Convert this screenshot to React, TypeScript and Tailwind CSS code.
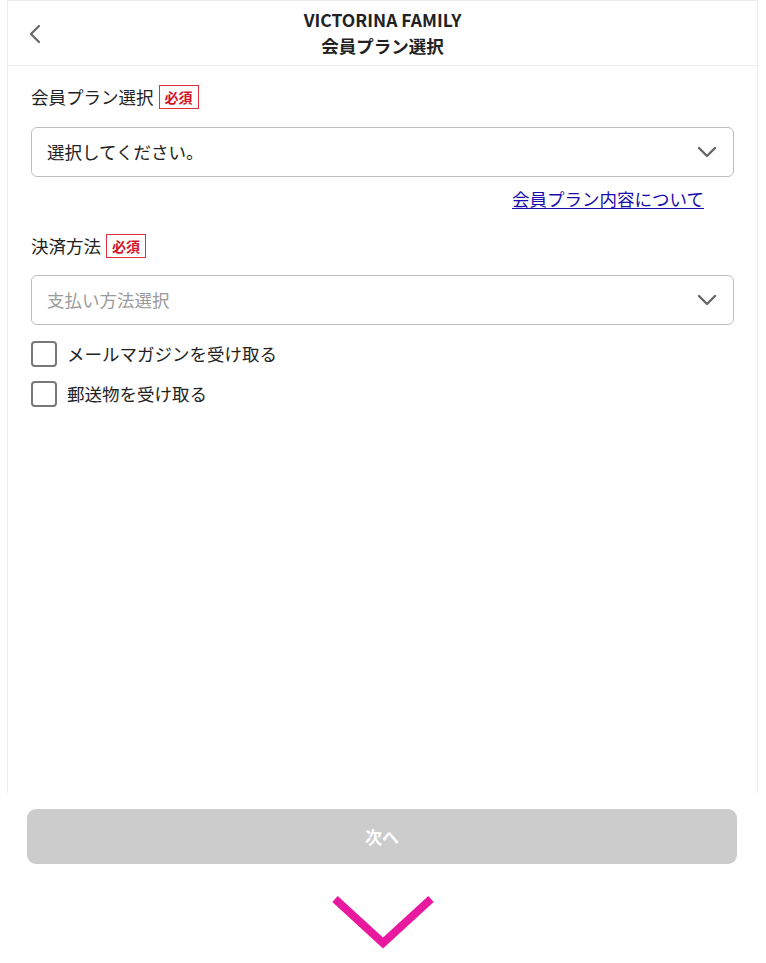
import React from 'react'

const font = { fontFamily: '"Noto Sans CJK JP", "Noto Sans", sans-serif' }

function Required() {
  return (
    <span className="ml-[5px] inline-flex h-[24px] items-center border border-[#e0303f] px-[5px] text-[14px] font-bold leading-none text-[#d3142a]">
      必須
    </span>
  )
}

function Chevron({ className }: { className?: string }) {
  return (
    <svg className={className} width="20" height="12" viewBox="0 0 20 12" fill="none">
      <path d="M2 2l8 8 8-8" stroke="#666" strokeWidth="2.4" strokeLinecap="round" strokeLinejoin="round" />
    </svg>
  )
}

function SelectBox({ text, placeholder }: { text: string; placeholder?: boolean }) {
  return (
    <div className="flex h-[50px] items-center justify-between rounded-[6px] border border-[#bdbdbd] pl-[15px] pr-[16px]">
      <span className={`text-[17.5px] ${placeholder ? 'text-[#9a9a9a]' : 'text-[#222]'}`}>{text}</span>
      <Chevron />
    </div>
  )
}

function Check({ label }: { label: string }) {
  return (
    <label className="flex items-center gap-[10px]">
      <span className="h-[26px] w-[26px] rounded-[4px] border-2 border-[#777]" />
      <span className="text-[17.5px] text-[#222]">{label}</span>
    </label>
  )
}

export default function App() {
  return (
    <div className="min-h-[963px] bg-white" style={font}>
      <div className="ml-[7px] h-[793px] w-[751px] border-x border-t border-[#ececec]">
        <header className="relative flex h-[65px] flex-col items-center justify-center border-b border-[#ececec]">
          <svg className="absolute left-[20px] top-[23px]" width="14" height="20" viewBox="0 0 14 20" fill="none">
            <path d="M11 2L3 10l8 8" stroke="#666" strokeWidth="2.2" strokeLinecap="round" strokeLinejoin="round" />
          </svg>
          <p className="text-[17.5px] font-bold leading-[26px] text-[#222]">VICTORINA FAMILY</p>
          <p className="text-[17.5px] font-bold leading-[26px] text-[#222]">会員プラン選択</p>
        </header>

        <div className="px-[23px] pt-[18px]">
          <div className="flex items-center text-[17.5px] text-[#222]">
            会員プラン選択
            <Required />
          </div>
          <div className="mt-[17px]">
            <SelectBox text="選択してください。" />
          </div>
          <div className="mt-[9px] flex justify-end pr-[30px]">
            <a href="#" className="text-[17.5px] text-[#1a0dab] underline underline-offset-2">
              会員プラン内容について
            </a>
          </div>

          <div className="mt-[20px] flex items-center text-[17.5px] text-[#222]">
            決済方法
            <Required />
          </div>
          <div className="mt-[16px]">
            <SelectBox text="支払い方法選択" placeholder />
          </div>

          <div className="mt-[16px] flex flex-col gap-[14px]">
            <Check label="メールマガジンを受け取る" />
            <Check label="郵送物を受け取る" />
          </div>
        </div>
      </div>

      <div className="px-[27px] pt-[16px]">
        <button className="flex h-[55px] w-[710px] items-center justify-center rounded-[9px] bg-[#cccccc] text-[17px] font-bold text-white">
          次へ
        </button>
      </div>

      <div className="flex justify-center pt-[32px]">
        <svg width="104" height="54" viewBox="0 0 104 54" fill="none">
          <path d="M4 3l48 44 48-44" stroke="#e8199f" strokeWidth="8" />
        </svg>
      </div>
    </div>
  )
}
